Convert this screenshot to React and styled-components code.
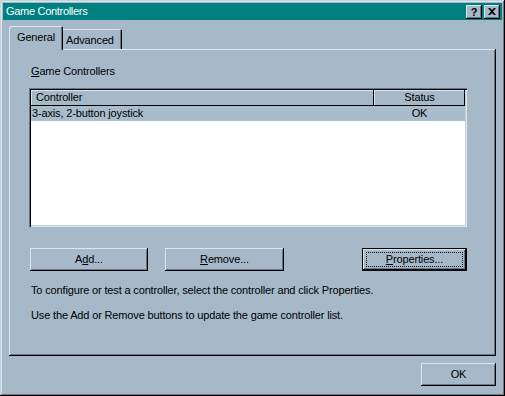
import React from "react";
import styled, { createGlobalStyle } from "styled-components";

const C = {
  face: "#a6b9c9",
  light: "#dce6ee",
  mid: "#c3d1dc",
  shadow: "#66788a",
  dark: "#000000",
  title: "#008080",
};

const Global = createGlobalStyle`
  html, body { margin: 0; padding: 0; background: ${C.face}; }
  body { font-family: "Liberation Sans", Arial, sans-serif; font-size: 11px; letter-spacing: -0.15px; color: #000; }
  * { box-sizing: border-box; }
`;

const Window = styled.div`
  width: 505px;
  height: 396px;
  background: ${C.face};
  padding: 3px;
  display: flex;
  flex-direction: column;
  box-shadow: inset -1px -1px ${C.dark}, inset 1px 1px ${C.mid},
    inset -2px -2px ${C.shadow}, inset 2px 2px ${C.light};
`;

const TitleBar = styled.div`
  height: 17px;
  background: ${C.title};
  color: #fff;
  display: flex;
  align-items: center;
  justify-content: space-between;
  padding: 0 2px 0 3px;
  font-size: 11px;
  flex: none;
`;

const TitleText = styled.span`
  line-height: 17px;
  letter-spacing: -0.3px;
`;

const TitleButtons = styled.div`
  display: flex;
  gap: 2px;
`;

const CaptionButton = styled.div`
  width: 16px;
  height: 14px;
  background: ${C.face};
  display: flex;
  align-items: center;
  justify-content: center;
  color: #000;
  font-weight: bold;
  font-size: 11px;
  box-shadow: inset -1px -1px ${C.dark}, inset 1px 1px ${C.light},
    inset -2px -2px ${C.shadow};
`;

const Body = styled.div`
  flex: 1;
  display: flex;
  flex-direction: column;
  padding: 6px 6px 0 6px;
`;

const TabStrip = styled.div`
  display: flex;
  align-items: flex-end;
  height: 23px;
  padding-left: 2px;
  position: relative;
  z-index: 1;
  flex: none;
`;

const Tab = styled.div`
  height: ${(p) => (p.$active ? "24px" : "20px")};
  margin: ${(p) => (p.$active ? "0 -2px -1px -2px" : "0")};
  padding: ${(p) => (p.$active ? "5px 8px 0 8px" : "5px 8px 0 5px")};
  background: ${C.face};
  line-height: 13px;
  border-radius: 2px 2px 0 0;
  box-shadow: inset 1px 1px ${C.light}, inset -1px 0 ${C.dark},
    inset -2px 0 ${C.shadow};
  position: relative;
  z-index: ${(p) => (p.$active ? 2 : 1)};
`;

const Panel = styled.div`
  height: 307px;
  flex: none;
  padding: 16px 29px 0 20px;
  display: flex;
  flex-direction: column;
  box-shadow: inset -1px -1px ${C.dark}, inset 1px 1px ${C.light},
    inset -2px -2px ${C.shadow};
`;

const Label = styled.div`
  line-height: 13px;
  margin-left: 2px;
`;

const U = styled.span`
  text-decoration: underline;
  text-underline-offset: 1px;
`;

const List = styled.div`
  margin-top: 10px;
  height: 139px;
  width: 438px;
  background: #fff;
  padding: 2px 1px 1px 2px;
  box-shadow: inset 1px 1px ${C.shadow}, inset 2px 2px ${C.dark},
    inset -1px -1px ${C.light}, inset -2px -2px ${C.mid};
  display: flex;
  flex-direction: column;
`;

const HeaderRow = styled.div`
  display: flex;
  height: 16px;
  flex: none;
`;

const HeaderCell = styled.div`
  width: ${(p) => p.$w}px;
  flex: none;
  background: ${C.face};
  line-height: 15px;
  padding-left: ${(p) => (p.$center ? 0 : 5)}px;
  text-align: ${(p) => (p.$center ? "center" : "left")};
  box-shadow: inset -1px -1px ${C.dark}, inset 1px 1px ${C.light};
`;

const Row = styled.div`
  display: flex;
  height: 15px;
  background: ${(p) => (p.$selected ? "#a9bccb" : "transparent")};
  line-height: 15px;
  width: 434px;
`;

const Cell = styled.div`
  width: ${(p) => p.$w}px;
  flex: none;
  padding-left: ${(p) => (p.$center ? 0 : 1)}px;
  text-align: ${(p) => (p.$center ? "center" : "left")};
`;

const ButtonRow = styled.div`
  display: flex;
  margin-top: 21px;
  width: 438px;
  padding-left: 1px;
`;

const Button = styled.div`
  width: ${(p) => p.$w}px;
  height: 23px;
  margin-left: ${(p) => p.$ml || 0}px;
  background: ${C.face};
  display: flex;
  align-items: center;
  justify-content: center;
  line-height: 13px;
  position: relative;
  box-shadow: ${(p) =>
    p.$default
      ? `inset 0 0 0 1px ${C.dark}, inset -2px -2px ${C.dark}, inset 2px 2px ${C.light}, inset -3px -3px ${C.shadow}`
      : `inset -1px -1px ${C.dark}, inset 1px 1px ${C.light}, inset -2px -2px ${C.shadow}`};
`;

const Focus = styled.span`
  position: absolute;
  inset: 4px;
  border: 1px dotted #000;
  pointer-events: none;
`;

const Help = styled.div`
  line-height: 13px;
  margin-top: ${(p) => p.$mt}px;
  margin-left: 2px;
`;

const Footer = styled.div`
  display: flex;
  justify-content: flex-end;
  padding-top: 7px;
  padding-right: 0;
`;

export default function App() {
  return (
    <>
      <Global />
      <Window>
        <TitleBar>
          <TitleText>Game Controllers</TitleText>
          <TitleButtons>
            <CaptionButton>?</CaptionButton>
            <CaptionButton>
              <svg width="8" height="7" viewBox="0 0 8 7">
                <path d="M0 0h2l2 2 2-2h2L5 3.5 8 7H6L4 5 2 7H0l3-3.5z" fill="#000" />
              </svg>
            </CaptionButton>
          </TitleButtons>
        </TitleBar>
        <Body>
          <TabStrip>
            <Tab $active>General</Tab>
            <Tab>Advanced</Tab>
          </TabStrip>
          <Panel>
            <Label>
              <U>G</U>ame Controllers
            </Label>
            <List>
              <HeaderRow>
                <HeaderCell $w={343}>Controller</HeaderCell>
                <HeaderCell $w={91} $center>
                  Status
                </HeaderCell>
              </HeaderRow>
              <Row $selected>
                <Cell $w={343}>3-axis, 2-button joystick</Cell>
                <Cell $w={91} $center>
                  OK
                </Cell>
              </Row>
            </List>
            <ButtonRow>
              <Button $w={118}>
                <span>
                  A<U>d</U>d...
                </span>
              </Button>
              <Button $w={119} $ml={17}>
                <span>
                  <U>R</U>emove...
                </span>
              </Button>
              <Button $w={105} $ml={78} $default>
                <Focus />
                <span>
                  <U>P</U>roperties...
                </span>
              </Button>
            </ButtonRow>
            <Help $mt={13}>
              To configure or test a controller, select the controller and click Properties.
            </Help>
            <Help $mt={12}>
              Use the Add or Remove buttons to update the game controller list.
            </Help>
          </Panel>
          <Footer>
            <Button $w={75}>OK</Button>
          </Footer>
        </Body>
      </Window>
    </>
  );
}
